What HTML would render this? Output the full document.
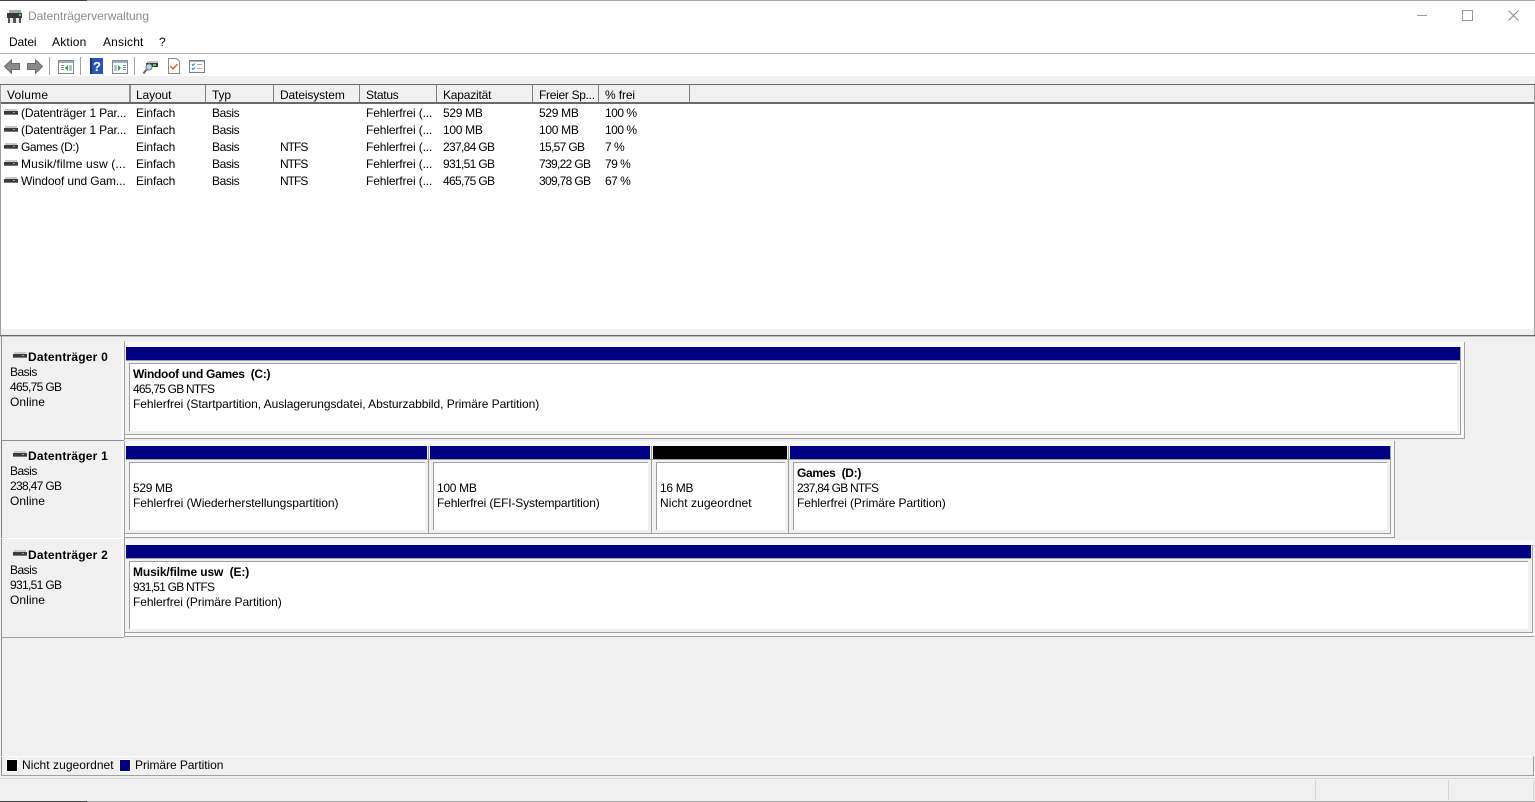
<!DOCTYPE html>
<html><head><meta charset="utf-8"><title>Datenträgerverwaltung</title>
<style>
html,body{margin:0;padding:0;width:1535px;height:802px;overflow:hidden;background:#fff}
body{position:relative;font:12px/15px "Liberation Sans",sans-serif;color:#000}
.t{position:absolute;white-space:nowrap;line-height:15px;letter-spacing:-.12px}
.r{position:absolute}
.b{font-weight:bold;letter-spacing:.2px}
.n{letter-spacing:-.67px}
.m{letter-spacing:-.3px}
.f{letter-spacing:-.05px}
.ba{letter-spacing:-.42px}
.nt{letter-spacing:-1px}
.g{letter-spacing:-.77px}
.p{letter-spacing:-.5px}
svg{position:absolute;overflow:visible}
.in{position:absolute;background:#fff;border-top:1px solid #a0a0a0;border-left:1px solid #a0a0a0;box-sizing:border-box}
</style></head><body>
<svg width="0" height="0" style="position:absolute"><defs>
<symbol id="d" viewBox="0 0 14 7"><rect x="1" y="0" width="12" height="2" fill="#c8c8c8"/><rect x="0" y="2" width="14" height="3" fill="#3c3c3c"/><rect x="9" y="3" width="2" height="1" fill="#3fdc5a"/><rect x="0" y="5" width="14" height="1" fill="#777"/></symbol>
</defs></svg>

<!-- window top -->
<div class="r" style="left:0;top:0;width:1535px;height:1px;background:#a8a8a8"></div>
<div class="r" style="left:0;top:0;width:87px;height:1px;background:#444"></div>
<svg style="left:7px;top:9px" width="16" height="15" viewBox="0 0 16 15"><rect x="2" y="1" width="12" height="3" fill="#a8a8a8"/><rect x="0" y="4" width="15" height="5" fill="#3a3a3a"/><rect x="12" y="5" width="2" height="2" fill="#3fdc5a"/><rect x="1" y="9" width="13" height="5" fill="#555"/><rect x="3" y="9" width="3" height="5" fill="#e8e8e8"/><rect x="9" y="9" width="3" height="5" fill="#e8e8e8"/></svg>
<div class="t" style="left:28px;top:9px;color:#8c8c8c;letter-spacing:-.02px">Datenträgerverwaltung</div>
<div class="r" style="left:1417px;top:15px;width:10px;height:1px;background:#9a9a9a"></div>
<div class="r" style="left:1462px;top:10px;width:9px;height:9px;border:1px solid #9a9a9a"></div>
<svg style="left:1508px;top:10px" width="11" height="11" viewBox="0 0 11 11"><path d="M.5.5l10 10M10.5.5l-10 10" stroke="#8a8a8a" stroke-width="1" fill="none"/></svg>

<!-- menu -->
<div class="t" style="left:9px;top:35px">Datei</div>
<div class="t" style="left:52px;top:35px;letter-spacing:.2px">Aktion</div>
<div class="t" style="left:103px;top:35px;letter-spacing:.17px">Ansicht</div>
<div class="t" style="left:159px;top:35px">?</div>
<div class="r" style="left:0;top:53px;width:1535px;height:1px;background:#b4b4b8"></div>

<!-- toolbar -->
<svg style="left:4px;top:59px" width="16" height="15" viewBox="0 0 16 15"><path d="M.5 7.500L7.500.8v3.700h8v6h-8v3.700z" fill="#8a8a8a" stroke="#6c6c6c"/></svg>
<svg style="left:27px;top:59px" width="16" height="15" viewBox="0 0 16 15"><path d="M15.500 7.500L8.500.8v3.700h-8v6h8v3.700z" fill="#8a8a8a" stroke="#6c6c6c"/></svg>
<div class="r" style="left:49px;top:57px;width:1px;height:18px;background:#a0a0a0"></div>
<svg style="left:58px;top:60px" width="16" height="14" viewBox="0 0 16 14"><rect x=".5" y=".5" width="15" height="13" fill="#fff" stroke="#7c8a94"/><rect x="1" y="1" width="14" height="2" fill="#9fb0bc"/><rect x="3" y="5" width="3" height="1" fill="#7c8a94"/><rect x="3" y="7" width="3" height="1" fill="#7c8a94"/><rect x="3" y="9" width="3" height="1" fill="#7c8a94"/><rect x="11" y="5" width="3" height="6" fill="#b8c4cc"/><path d="M10 5v6L7 8z" fill="#1ea830"/></svg>
<div class="r" style="left:80px;top:57px;width:1px;height:18px;background:#a0a0a0"></div>
<svg style="left:90px;top:58px" width="13" height="16" viewBox="0 0 13 16"><rect width="13" height="16" fill="#2a55b8"/><rect x="0" y="0" width="2" height="16" fill="#16307c"/><text x="7" y="13" font-family="Liberation Sans" font-size="13" font-weight="bold" fill="#fff" text-anchor="middle">?</text></svg>
<svg style="left:112px;top:60px" width="16" height="14" viewBox="0 0 16 14"><rect x=".5" y=".5" width="15" height="13" fill="#fff" stroke="#7c8a94"/><rect x="1" y="1" width="14" height="2" fill="#9fb0bc"/><rect x="2" y="5" width="3" height="6" fill="#b8c4cc"/><rect x="11" y="5" width="3" height="1" fill="#7c8a94"/><rect x="11" y="7" width="3" height="1" fill="#7c8a94"/><rect x="11" y="9" width="3" height="1" fill="#7c8a94"/><path d="M6 5v6l3-3z" fill="#1ea830"/></svg>
<div class="r" style="left:134px;top:57px;width:1px;height:18px;background:#a0a0a0"></div>
<svg style="left:143px;top:60px" width="16" height="15" viewBox="0 0 16 15"><rect x="4" y="1" width="11" height="2" fill="#c4c4c4"/><rect x="3" y="3" width="12" height="4" fill="#3a3a3a"/><rect x="10" y="4" width="3" height="2" fill="#3fdc5a"/><circle cx="6" cy="7" r="3" fill="#bcd8ea" stroke="#6a7a88"/><path d="M3.500 9.500L.5 13.500" stroke="#6a6a6a" stroke-width="2"/></svg>
<svg style="left:168px;top:58px" width="12" height="16" viewBox="0 0 12 16"><path d="M.5.5h8l3 3v12H.5z" fill="#fff" stroke="#8a8a8a"/><path d="M2.500 8l2.500 3 4.500-5" stroke="#e2602a" stroke-width="1.500" fill="none"/></svg>
<svg style="left:189px;top:60px" width="16" height="13" viewBox="0 0 16 13"><rect x=".5" y=".5" width="15" height="12" fill="#fff" stroke="#77838c"/><rect x="1" y="1" width="14" height="1" fill="#aab4bc"/><path d="M3 4l1 1.500L6 3.500M3 8l1 1.500L6 7.500" stroke="#2a7ad8" fill="none"/><rect x="8" y="4" width="5" height="1" fill="#a8b0b8"/><rect x="8" y="8" width="5" height="1" fill="#a8b0b8"/></svg>

<!-- list header -->
<div class="r" style="left:0;top:76px;width:1535px;height:8px;background:#f0f0f0"></div>
<div class="r" style="left:0;top:84px;width:1535px;height:1px;background:#696969"></div>
<div class="r" style="left:0;top:85px;width:1535px;height:17px;background:#f0f0f0"></div>
<div class="r" style="left:0;top:102px;width:1535px;height:2px;background:#696969"></div>
<div class="r" style="left:129px;top:85px;width:2px;height:17px;background:#909090"></div>
<div class="r" style="left:205px;top:85px;width:1px;height:17px;background:#808080"></div>
<div class="r" style="left:273px;top:85px;width:1px;height:17px;background:#808080"></div>
<div class="r" style="left:359px;top:85px;width:1px;height:17px;background:#808080"></div>
<div class="r" style="left:436px;top:85px;width:1px;height:17px;background:#808080"></div>
<div class="r" style="left:532px;top:85px;width:1px;height:17px;background:#808080"></div>
<div class="r" style="left:598px;top:85px;width:1px;height:17px;background:#808080"></div>
<div class="r" style="left:689px;top:85px;width:1px;height:17px;background:#808080"></div>
<div class="t" style="left:7px;top:88px;letter-spacing:.2px">Volume</div>
<div class="t" style="left:136px;top:88px">Layout</div>
<div class="t" style="left:212px;top:88px">Typ</div>
<div class="t" style="left:280px;top:88px">Dateisystem</div>
<div class="t" style="left:366px;top:88px;letter-spacing:-.25px">Status</div>
<div class="t" style="left:443px;top:88px;letter-spacing:-.2px">Kapazität</div>
<div class="t" style="left:539px;top:88px;letter-spacing:-.3px">Freier Sp...</div>
<div class="t" style="left:605px;top:88px">% frei</div>

<!-- list rows -->
<svg style="left:4px;top:109px" width="14" height="7"><use href="#d"/></svg>
<svg style="left:4px;top:126px" width="14" height="7"><use href="#d"/></svg>
<svg style="left:4px;top:143px" width="14" height="7"><use href="#d"/></svg>
<svg style="left:4px;top:160px" width="14" height="7"><use href="#d"/></svg>
<svg style="left:4px;top:177px" width="14" height="7"><use href="#d"/></svg>

<div class="t" style="left:21px;top:106px;letter-spacing:-.17px">(Datenträger 1 Par...</div><div class="t" style="left:136px;top:106px">Einfach</div><div class="t ba" style="left:212px;top:106px">Basis</div><div class="t" style="left:366px;top:106px">Fehlerfrei (...</div><div class="t m" style="left:443px;top:106px">529 MB</div><div class="t m" style="left:539px;top:106px">529 MB</div><div class="t" style="left:605px;top:106px;letter-spacing:-.5px">100 %</div>
<div class="t" style="left:21px;top:123px;letter-spacing:-.17px">(Datenträger 1 Par...</div><div class="t" style="left:136px;top:123px">Einfach</div><div class="t ba" style="left:212px;top:123px">Basis</div><div class="t" style="left:366px;top:123px">Fehlerfrei (...</div><div class="t m" style="left:443px;top:123px">100 MB</div><div class="t m" style="left:539px;top:123px">100 MB</div><div class="t" style="left:605px;top:123px;letter-spacing:-.5px">100 %</div>
<div class="t" style="left:21px;top:140px;letter-spacing:-.42px">Games (D:)</div><div class="t" style="left:136px;top:140px">Einfach</div><div class="t ba" style="left:212px;top:140px">Basis</div><div class="t nt" style="left:280px;top:140px">NTFS</div><div class="t" style="left:366px;top:140px">Fehlerfrei (...</div><div class="t n" style="left:443px;top:140px">237,84 GB</div><div class="t n" style="left:539px;top:140px">15,57 GB</div><div class="t p" style="left:605px;top:140px">7 %</div>
<div class="t" style="left:21px;top:157px;letter-spacing:.14px">Musik/filme usw (...</div><div class="t" style="left:136px;top:157px">Einfach</div><div class="t ba" style="left:212px;top:157px">Basis</div><div class="t nt" style="left:280px;top:157px">NTFS</div><div class="t" style="left:366px;top:157px">Fehlerfrei (...</div><div class="t n" style="left:443px;top:157px">931,51 GB</div><div class="t n" style="left:539px;top:157px">739,22 GB</div><div class="t p" style="left:605px;top:157px">79 %</div>
<div class="t" style="left:21px;top:174px">Windoof und Gam...</div><div class="t" style="left:136px;top:174px">Einfach</div><div class="t ba" style="left:212px;top:174px">Basis</div><div class="t nt" style="left:280px;top:174px">NTFS</div><div class="t" style="left:366px;top:174px">Fehlerfrei (...</div><div class="t n" style="left:443px;top:174px">465,75 GB</div><div class="t n" style="left:539px;top:174px">309,78 GB</div><div class="t p" style="left:605px;top:174px">67 %</div>

<!-- lower pane -->
<div class="r" style="left:0;top:329px;width:1535px;height:473px;background:#f0f0f0"></div>
<div class="r" style="left:1534px;top:85px;width:1px;height:250px;background:#a0a0a0"></div>
<div class="r" style="left:0;top:85px;width:1px;height:250px;background:#a0a0a0"></div>
<div class="r" style="left:0;top:335px;width:1535px;height:1px;background:#696969"></div>
<div class="r" style="left:0;top:336px;width:1535px;height:1px;background:#c0c0c0"></div>
<div class="r" style="left:1px;top:336px;width:1px;height:440px;background:#909090"></div>

<!-- Disk 0 label -->
<div class="r" style="left:124px;top:341px;width:1px;height:99px;background:#a0a0a0"></div>
<div class="r" style="left:121px;top:341px;width:3px;height:99px;background:#f8f8f8"></div>
<svg style="left:13px;top:352px" width="14" height="7"><use href="#d"/></svg>
<div class="t b" style="left:28px;top:350px">Datenträger 0</div>
<div class="t p" style="left:10px;top:365px">Basis</div>
<div class="t n" style="left:10px;top:380px">465,75 GB</div>
<div class="t" style="left:10px;top:395px;letter-spacing:.05px">Online</div>

<!-- Disk 0 map -->
<div class="r" style="left:125px;top:342px;width:1339px;height:96px;background:#f8f8f8;border-right:1px solid #a0a0a0;border-bottom:1px solid #a0a0a0"></div>
<div class="r" style="left:125px;top:347px;width:1335px;height:87px;background:#f0f0f0;border-right:1px solid #a0a0a0;border-bottom:1px solid #a0a0a0"></div>
<div class="r" style="left:126px;top:347px;width:1334px;height:13px;background:#000080"></div>
<div class="r" style="left:126px;top:360px;width:1334px;height:1px;background:#a0a0a0"></div>
<div class="in" style="left:129px;top:363px;width:1328px;height:68px"></div>
<div class="t b" style="left:133px;top:367px;letter-spacing:-.29px">Windoof und Games&nbsp; (C:)</div>
<div class="t g" style="left:133px;top:382px">465,75 GB NTFS</div>
<div class="t f" style="left:133px;top:397px">Fehlerfrei (Startpartition, Auslagerungsdatei, Absturzabbild, Primäre Partition)</div>

<!-- Disk 1 label -->
<div class="r" style="left:1px;top:440px;width:123px;height:1px;background:#909090"></div>
<div class="r" style="left:1px;top:440px;width:1px;height:98px;background:#808080"></div>
<div class="r" style="left:124px;top:441px;width:1px;height:98px;background:#a0a0a0"></div>
<div class="r" style="left:121px;top:441px;width:3px;height:97px;background:#f8f8f8"></div>
<div class="r" style="left:0;top:538px;width:124px;height:1px;background:#fff"></div>
<svg style="left:13px;top:451px" width="14" height="7"><use href="#d"/></svg>
<div class="t b" style="left:28px;top:449px">Datenträger 1</div>
<div class="t p" style="left:10px;top:464px">Basis</div>
<div class="t n" style="left:10px;top:479px">238,47 GB</div>
<div class="t" style="left:10px;top:494px;letter-spacing:.05px">Online</div>

<!-- Disk 1 map -->
<div class="r" style="left:125px;top:441px;width:1269px;height:96px;background:#f8f8f8;border-right:1px solid #a0a0a0;border-bottom:1px solid #a0a0a0"></div>
<div class="r" style="left:125px;top:446px;width:1265px;height:87px;background:#f0f0f0;border-right:1px solid #a0a0a0;border-bottom:1px solid #a0a0a0"></div>
<div class="r" style="left:126px;top:459px;width:1264px;height:1px;background:#a0a0a0"></div>
<div class="r" style="left:126px;top:446px;width:301px;height:13px;background:#000080"></div>
<div class="r" style="left:430px;top:446px;width:220px;height:13px;background:#000080"></div>
<div class="r" style="left:653px;top:446px;width:134px;height:13px;background:#000"></div>
<div class="r" style="left:790px;top:446px;width:600px;height:13px;background:#000080"></div>
<div class="r" style="left:428px;top:446px;width:1px;height:87px;background:#a0a0a0"></div>
<div class="r" style="left:651px;top:446px;width:1px;height:87px;background:#a0a0a0"></div>
<div class="r" style="left:788px;top:446px;width:1px;height:87px;background:#a0a0a0"></div>
<div class="in" style="left:129px;top:462px;width:296px;height:68px"></div>
<div class="in" style="left:433px;top:462px;width:215px;height:68px"></div>
<div class="in" style="left:656px;top:462px;width:129px;height:68px"></div>
<div class="in" style="left:793px;top:462px;width:594px;height:68px"></div>
<div class="t m" style="left:133px;top:481px">529 MB</div>
<div class="t f" style="left:133px;top:496px">Fehlerfrei (Wiederherstellungspartition)</div>
<div class="t m" style="left:437px;top:481px">100 MB</div>
<div class="t" style="left:437px;top:496px;letter-spacing:-.15px">Fehlerfrei (EFI-Systempartition)</div>
<div class="t m" style="left:660px;top:481px">16 MB</div>
<div class="t" style="left:660px;top:496px;letter-spacing:.06px">Nicht zugeordnet</div>
<div class="t b" style="left:797px;top:466px;letter-spacing:-.3px">Games&nbsp; (D:)</div>
<div class="t g" style="left:797px;top:481px">237,84 GB NTFS</div>
<div class="t" style="left:797px;top:496px;letter-spacing:-.09px">Fehlerfrei (Primäre Partition)</div>

<!-- Disk 2 label -->
<div class="r" style="left:124px;top:539px;width:1px;height:98px;background:#a0a0a0"></div>
<div class="r" style="left:121px;top:540px;width:3px;height:97px;background:#f8f8f8"></div>
<div class="r" style="left:2px;top:637px;width:122px;height:1px;background:#a0a0a0"></div>
<svg style="left:13px;top:550px" width="14" height="7"><use href="#d"/></svg>
<div class="t b" style="left:28px;top:548px">Datenträger 2</div>
<div class="t p" style="left:10px;top:563px">Basis</div>
<div class="t n" style="left:10px;top:578px">931,51 GB</div>
<div class="t" style="left:10px;top:593px;letter-spacing:.05px">Online</div>

<!-- Disk 2 map -->
<div class="r" style="left:125px;top:540px;width:1409px;height:96px;background:#f8f8f8;border-bottom:1px solid #a0a0a0"></div>
<div class="r" style="left:125px;top:545px;width:1407px;height:87px;background:#f0f0f0;border-right:1px solid #a0a0a0;border-bottom:1px solid #a0a0a0"></div>
<div class="r" style="left:126px;top:545px;width:1405px;height:13px;background:#000080"></div>
<div class="r" style="left:126px;top:558px;width:1405px;height:1px;background:#a0a0a0"></div>
<div class="in" style="left:129px;top:561px;width:1399px;height:68px"></div>
<div class="t b" style="left:133px;top:565px;letter-spacing:-.12px">Musik/filme usw&nbsp; (E:)</div>
<div class="t g" style="left:133px;top:580px">931,51 GB NTFS</div>
<div class="t" style="left:133px;top:595px;letter-spacing:-.09px">Fehlerfrei (Primäre Partition)</div>

<!-- legend -->
<div class="r" style="left:0;top:756px;width:1535px;height:1px;background:#fff"></div>
<div class="r" style="left:1px;top:775px;width:1533px;height:1px;background:#a0a0a0"></div>
<div class="r" style="left:1533px;top:756px;width:1px;height:20px;background:#a0a0a0"></div>
<div class="r" style="left:6px;top:759px;width:12px;height:13px;background:#fff"></div>
<div class="r" style="left:7px;top:760px;width:10px;height:11px;background:#000"></div>
<div class="t" style="left:22px;top:758px;letter-spacing:.06px">Nicht zugeordnet</div>
<div class="r" style="left:119px;top:759px;width:12px;height:13px;background:#fff"></div>
<div class="r" style="left:120px;top:760px;width:10px;height:11px;background:#000080"></div>
<div class="t" style="left:135px;top:758px;letter-spacing:-.06px">Primäre Partition</div>

<!-- status bar -->
<div class="r" style="left:0;top:778px;width:1535px;height:1px;background:#d9d9d9"></div>
<div class="r" style="left:1315px;top:780px;width:1px;height:20px;background:#d4d4d4"></div>
<div class="r" style="left:1448px;top:780px;width:1px;height:20px;background:#d4d4d4"></div>
<div class="r" style="left:1533px;top:780px;width:1px;height:20px;background:#d4d4d4"></div>
<div class="r" style="left:0;top:801px;width:1535px;height:1px;background:#a8a8a8"></div>
<div class="r" style="left:0;top:801px;width:87px;height:1px;background:#444"></div>
</body></html>
